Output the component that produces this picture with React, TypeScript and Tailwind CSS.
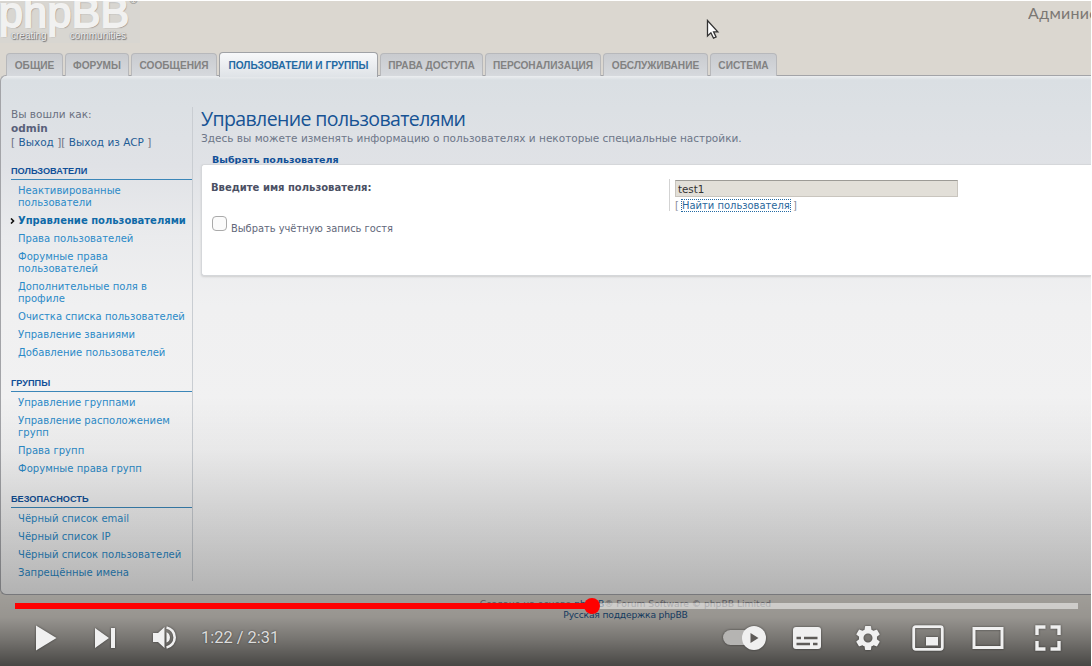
import React from 'react';

interface MenuItem {
  lines: string[];
  active?: boolean;
}

interface MenuGroup {
  title: string;
  items: MenuItem[];
}

const tabs = [
  { label: 'ОБЩИЕ', width: 'w-[57px]' },
  { label: 'ФОРУМЫ', width: 'w-[64px]' },
  { label: 'СООБЩЕНИЯ', width: 'w-[86px]' },
  { label: 'ПОЛЬЗОВАТЕЛИ И ГРУППЫ', width: 'w-[159px]', active: true },
  { label: 'ПРАВА ДОСТУПА', width: 'w-[103px]' },
  { label: 'ПЕРСОНАЛИЗАЦИЯ', width: 'w-[116px]' },
  { label: 'ОБСЛУЖИВАНИЕ', width: 'w-[105px]' },
  { label: 'СИСТЕМА', width: 'w-[67px]' },
];

const menu: MenuGroup[] = [
  {
    title: 'ПОЛЬЗОВАТЕЛИ',
    items: [
      { lines: ['Неактивированные', 'пользователи'] },
      { lines: ['Управление пользователями'], active: true },
      { lines: ['Права пользователей'] },
      { lines: ['Форумные права', 'пользователей'] },
      { lines: ['Дополнительные поля в', 'профиле'] },
      { lines: ['Очистка списка пользователей'] },
      { lines: ['Управление званиями'] },
      { lines: ['Добавление пользователей'] },
    ],
  },
  {
    title: 'ГРУППЫ',
    items: [
      { lines: ['Управление группами'] },
      { lines: ['Управление расположением', 'групп'] },
      { lines: ['Права групп'] },
      { lines: ['Форумные права групп'] },
    ],
  },
  {
    title: 'БЕЗОПАСНОСТЬ',
    items: [
      { lines: ['Чёрный список email'] },
      { lines: ['Чёрный список IP'] },
      { lines: ['Чёрный список пользователей'] },
      { lines: ['Запрещённые имена'] },
    ],
  },
];

const Header = () => (
  <header className="relative flex h-[51px] shrink-0 justify-between">
    <div className="relative h-[42px] w-[140px] overflow-hidden bg-[#d8d6d1] font-['Liberation_Sans',sans-serif] text-[#f1f1f0]">
      <div className="absolute -left-[1px] -top-[17px] text-[43px] leading-[56px] tracking-[0.3px] [-webkit-text-stroke:2px_#f1f1f0] [text-shadow:1px_1px_1px_#77777b,0_0_2px_#aaa]">
        phpBB
      </div>
      <span className="absolute left-[129px] -top-[10px] text-[12px] text-[#8d8d8c]">®</span>
      <div className="absolute left-[11px] top-[29px] flex w-[115px] justify-between text-[10px] leading-[12px] [text-shadow:1px_1px_1px_#66666a,0_0_1px_#777]">
        <span>creating</span>
        <span>communities</span>
      </div>
    </div>
    <h1 className="w-[63px] overflow-hidden whitespace-nowrap pt-[1px] font-['Lato','Liberation_Sans',sans-serif] text-[16px] leading-[22px] tracking-[0.3px] text-[#7b7874]">
      Администраторский раздел
    </h1>
    <svg className="absolute left-[706px] top-[18px]" width="14" height="22" viewBox="0 0 14 22">
      <path d="M1.5 1.5V17l3.4-3.2 2.6 5.4 2.6-1.2-2.5-5.2h4.2z" fill="#fff" stroke="#333" strokeWidth="1.3" />
    </svg>
  </header>
);

const Tabs = () => (
  <nav className="relative z-10 flex h-[24px] shrink-0 items-end gap-[2px] pl-[6px]">
    {tabs.map((t) => (
      <a
        key={t.label}
        className={`flex shrink-0 justify-center whitespace-nowrap rounded-t-[4px] border border-b-0 font-['Liberation_Sans',sans-serif] text-[10.15px] leading-[13px] font-bold ${t.width} ${
          t.active
            ? 'relative -mb-px h-[25px] border-[#a0a2a6] bg-linear-to-b from-[#f7f8fa] to-[#dfe3e7] pt-[6px] text-[#246aa3]'
            : 'h-[23px] border-[#b7b8bb] bg-linear-to-b from-[#c9cbcf] to-[#d6d9dd] pt-[5px] text-[#828282]'
        }`}
      >
        {t.label}
      </a>
    ))}
  </nav>
);

const Sidebar = () => (
  <aside className="h-[474px] w-[182px] shrink-0 border-r border-[#c9cdd2] text-[10px] leading-[12px]">
    <div className="text-[10.5px] leading-[14px] text-[#6a7080]">
      <p>Вы вошли как:</p>
      <p className="font-bold text-[#59607a]">odmin</p>
      <p className="whitespace-nowrap">
        [ <a className="text-[#1f5d96]">Выход</a> ][ <a className="text-[#1f5d96]">Выход из ACP</a> ]
      </p>
    </div>
    {menu.map((group, i) => (
      <div key={group.title} className={i === 0 ? 'mt-[15px]' : 'mt-[14px]'}>
        <h2 className="h-[16px] border-b border-[#3b86b8] font-['Liberation_Sans',sans-serif] text-[9.2px] leading-[15px] font-bold text-[#115098]">
          {group.title}
        </h2>
        <ul className="pt-[2px]">
          {group.items.map((item) => (
            <li
              key={item.lines[0]}
              className={`relative whitespace-nowrap py-[3px] pl-[7px] ${
                item.active ? 'font-bold text-[#0f6aa8]' : 'tracking-[0.04px] text-[#2b8ac8]'
              }`}
            >
              {item.active && (
                <svg className="absolute -left-px top-[6px]" width="5" height="6" viewBox="0 0 5 6">
                  <path d="M1 .5 3.5 3 1 5.5" fill="none" stroke="#111" strokeWidth="1.6" />
                </svg>
              )}
              {item.lines.map((line) => (
                <span key={line} className="block">{line}</span>
              ))}
            </li>
          ))}
        </ul>
      </div>
    ))}
  </aside>
);

const Content = () => (
  <main className="min-w-0 flex-1 pl-[8px]">
    <h2 className="whitespace-nowrap font-['Open_Sans',sans-serif] text-[19.5px] leading-[24px] tracking-[-0.6px] text-[#175394]">
      Управление пользователями
    </h2>
    <p className="whitespace-nowrap text-[10.53px] leading-[14px] text-[#6d7688]">
      Здесь вы можете изменять информацию о пользователях и некоторые специальные настройки.
    </p>
    <h3 className="mt-[9px] h-[10px] overflow-hidden pl-[11px] text-[9.55px] leading-[12px] font-bold text-[#115098]">
      Выбрать пользователя
    </h3>
    <div className="flex h-[112px] rounded-l-[3px] border border-r-0 border-[#d5d7da] bg-white shadow-[0_1px_2px_#cfcfcf]">
      <div className="w-[467px] shrink-0 pl-[9px] pt-[16px] text-[10px] leading-[13px]">
        <label className="block font-bold text-[#4b5064]">Введите имя пользователя:</label>
        <label className="mt-[22px] flex items-start text-[9.9px] text-[#62677a]">
          <span className="mr-[4px] ml-px size-[15px] rounded-[4px] border border-[#aaa] bg-[#fbfbfb]" />
          <span className="pt-[6px]">Выбрать учётную запись гостя</span>
        </label>
      </div>
      <div className="mt-[14px] h-[32px] border-l border-[#d3d3d3] pl-[5px] text-[9.95px] leading-[14px]">
        <div className="mt-px h-[17px] w-[283px] border border-[#c9c5be] border-t-[#9d9b96] bg-[#e2dfd8] pl-[2px] text-[10.3px] leading-[16px] text-[#333]">
          test1
        </div>
        <p className="mt-[2px] whitespace-nowrap text-[#868b99]">
          [ <a className="text-[#2a679b] outline-1 outline-dotted outline-[#246aa3]">Найти пользователя</a> ]
        </p>
      </div>
    </div>
  </main>
);

const iconShadow = 'shrink-0 drop-shadow-[0_0_1px_rgba(0,0,0,0.5)]';

const PlayerControls = () => (
  <div className="absolute inset-x-0 bottom-0 h-[270px] bg-[linear-gradient(to_bottom,rgba(0,0,0,0)_0%,rgba(0,0,0,0.04)_20%,rgba(0,0,0,0.14)_44%,rgba(0,0,0,0.21)_61%,rgba(0,0,0,0.27)_74%,rgba(0,0,0,0.31)_82%,rgba(0,0,0,0.46)_90%,rgba(0,0,0,0.67)_100%)] pt-[207px]">
    <div className="relative ml-[15px] flex h-[6px] w-[1063px] bg-white/50">
      <div className="h-full w-[577px] bg-[#f00]" />
      <div className="absolute left-[569px] -top-[5px] size-[16px] rounded-full bg-[#f00]" />
    </div>
    <div className="flex h-[57px] items-center pt-[1px] pl-[34px] text-[#f0f0f0]">
      <svg className={iconShadow} width="24" height="26" viewBox="0 0 24 26">
        <path d="M2 .5v25L22.5 13z" fill="currentColor" />
      </svg>
      <svg className={`ml-[36px] ${iconShadow}`} width="22" height="22" viewBox="0 0 22 22">
        <path d="M1 1v20l14-10zM17 1h4v20h-4z" fill="currentColor" />
      </svg>
      <svg className={`ml-[36px] ${iconShadow}`} width="26" height="26" viewBox="0 0 26 26">
        <path d="M1 8v9h5l6.500 6V2L6 8z" fill="currentColor" />
        <path d="M14.5 7.3a5.5 5.5 0 0 1 0 10.200z" fill="currentColor" />
        <path d="M14.5 2.4a10.200 10.200 0 0 1 0 20" fill="none" stroke="currentColor" strokeWidth="2.6" />
      </svg>
      <span className="ml-[23px] w-[80px] whitespace-nowrap font-['Roboto',sans-serif] text-[16.4px] text-[#ddd] [text-shadow:0_0_2px_rgba(0,0,0,0.5)]">
        1:22 / 2:31
      </span>
      <svg className={`ml-[441px] ${iconShadow}`} width="44" height="26" viewBox="0 0 44 26">
        <rect x="1" y="5" width="38" height="15" rx="7.5" fill="#b5b4b2" />
        <circle cx="32" cy="13" r="12" fill="currentColor" />
        <path d="M28.5 8v10l8-5z" fill="#5e5b58" />
      </svg>
      <svg className={`ml-[26px] ${iconShadow}`} width="30" height="24" viewBox="0 0 30 24">
        <rect x="1" y="1" width="28" height="22" rx="3" fill="currentColor" />
        <path d="M4.500 12h4.500M12 12h13.500M4.500 18H18M21 18h4.500" stroke="#5e5b58" strokeWidth="2.4" />
      </svg>
      <svg className={`ml-[31px] ${iconShadow}`} width="30" height="30" viewBox="0 0 24 24">
        <path
          fill="currentColor"
          d="M19.14 12.94c.04-.3.06-.61.06-.94 0-.32-.02-.64-.07-.94l2.03-1.58c.18-.14.23-.41.12-.61l-1.92-3.32c-.12-.22-.37-.29-.59-.22l-2.39.96c-.5-.38-1.03-.7-1.62-.94l-.36-2.54c-.04-.24-.24-.41-.48-.41h-3.84c-.24 0-.43.17-.47.41l-.36 2.54c-.59.24-1.13.57-1.62.94l-2.39-.96c-.22-.08-.47 0-.59.22L2.74 8.87c-.12.21-.08.47.12.61l2.03 1.58c-.05.3-.09.63-.09.94s.02.64.07.94l-2.03 1.58c-.18.14-.23.41-.12.61l1.92 3.32c.12.22.37.29.59.22l2.39-.96c.5.38 1.03.7 1.62.94l.36 2.54c.05.24.24.41.48.41h3.84c.24 0 .44-.17.47-.41l.36-2.54c.59-.24 1.13-.56 1.62-.94l2.39.96c.22.08.47 0 .59-.22l1.92-3.32c.12-.22.07-.47-.12-.61zM12 15.6A3.6 3.6 0 1 1 12 8.4a3.6 3.6 0 0 1 0 7.2z"
        />
      </svg>
      <svg className={`ml-[29px] ${iconShadow}`} width="32" height="26" viewBox="0 0 32 26">
        <rect x="1.7" y="1.7" width="28.6" height="22.6" rx="2" fill="none" stroke="currentColor" strokeWidth="2.8" />
        <path d="M14 12h12v8.500H14z" fill="currentColor" />
      </svg>
      <svg className={`ml-[28px] ${iconShadow}`} width="32" height="24" viewBox="0 0 32 24">
        <path d="M2 2.500h28v19H2z" fill="none" stroke="currentColor" strokeWidth="3" />
      </svg>
      <svg className={`ml-[31px] ${iconShadow}`} width="26" height="26" viewBox="0 0 26 26">
        <path d="M2 10V2h8.500M15.500 2H24v8M2 16v8h8.500M15.500 24H24v-8" fill="none" stroke="currentColor" strokeWidth="3.4" />
      </svg>
    </div>
  </div>
);

const App = () => {
  return (
    <div className="h-[666px] w-[1092px] overflow-hidden bg-white pt-px pr-px">
      <div className="relative flex h-[665px] w-[1091px] flex-col overflow-hidden bg-[#dbd7d0] font-['DejaVu_Sans',sans-serif]">
        <Header />
        <Tabs />
        <div className="-mt-px flex h-[520px] shrink-0 rounded-l-[6px] border border-r-0 border-[#a3a4a8] bg-[linear-gradient(to_bottom,#eceef0_0px,#dadfe3_4px,#e0e2e6_90px,#eaebed_160px,#f0f0f1_230px,#f3f3f3_100%)] pl-[10px] pt-[31px]">
          <Sidebar />
          <Content />
        </div>
        <footer className="pt-[3px] text-center text-[9.2px] leading-[11px] text-[#7c7c85]">
          <p className="pl-[160px]">
            Создано на основе <a className="text-[#1b5488]">phpBB</a>® Forum Software © phpBB Limited
          </p>
          <p className="pl-[160px] tracking-[-0.2px] text-[#1b5488]">Русская поддержка phpBB</p>
        </footer>
        <PlayerControls />
      </div>
    </div>
  );
};

export default App;
